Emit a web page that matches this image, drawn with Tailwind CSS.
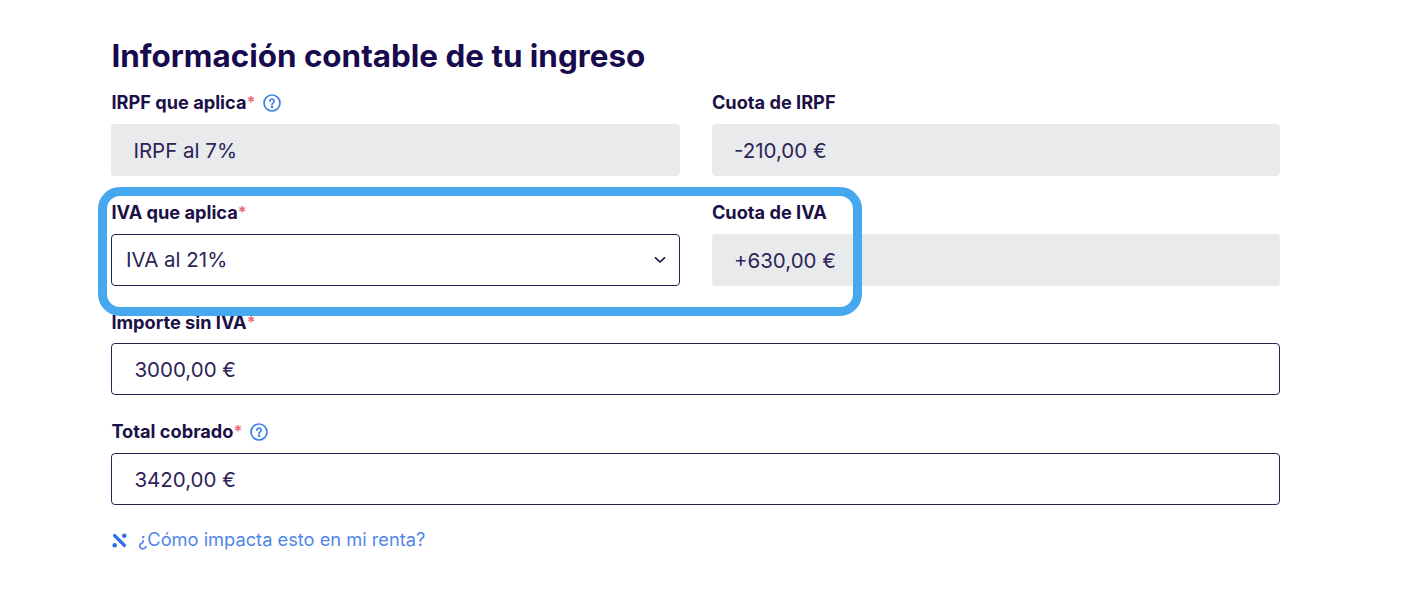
<!DOCTYPE html>
<html lang="es">
<head>
<meta charset="utf-8">
<script src="https://cdn.jsdelivr.net/npm/@tailwindcss/browser@4"></script>
</head>
<body class="bg-white">
<main class="relative w-[1426px] h-[594px] overflow-hidden pl-[111.4px] pt-[36px] font-['Inter',sans-serif] text-[#1b0f4b]">
  <h1 class="h-[40px] text-[31.4px] leading-[40px] font-[650] text-[#170a4d]">Información contable de tu ingreso</h1>
  <form class="mt-[16px] w-[1169px] grid grid-cols-2 gap-x-[32px] gap-y-[26px]">
    <div>
      <div class="h-[22px] mb-[10px] flex items-center text-[18.2px] font-[650] text-[#1c1147]">IRPF que aplica<span class="-mt-[3px] text-[16px] text-[#e9697a]">*</span>
        <svg class="ml-[8px] -mt-[1px]" width="18" height="18" viewBox="0 0 18 18" fill="none" stroke="#3f7fe8" stroke-width="1.7"><circle cx="9" cy="9" r="8"/><path d="M6.9 7.2a2.1 2.1 0 1 1 3.3 1.7c-.7.5-1.2.9-1.2 1.6" stroke-linecap="round"/><circle cx="9" cy="12.8" r=".5" fill="#3f7fe8"/></svg>
      </div>
      <div class="h-[52px] rounded-[4px] bg-[#e9eaec] pl-[22px] pt-[2px] flex items-center text-[20.5px] text-[#2c2358]">IRPF al 7%</div>
    </div>
    <div>
      <div class="h-[22px] mb-[10px] flex items-center text-[18.2px] font-[650] text-[#1c1147]">Cuota de IRPF</div>
      <div class="h-[52px] rounded-[4px] bg-[#e9eaec] pl-[22px] pt-[2px] flex items-center text-[20.5px] text-[#2c2358]">-210,00 €</div>
    </div>
    <div>
      <div class="h-[22px] mb-[10px] flex items-center text-[18.2px] font-[650] text-[#1c1147]">IVA que aplica<span class="-mt-[3px] text-[16px] text-[#e9697a]">*</span></div>
      <div class="h-[52px] rounded-[4px] border border-[#2a2350] pl-[13.5px] pr-[13px] flex items-center justify-between text-[20.5px] text-[#2c2358]">IVA al 21%
        <svg width="12" height="8" viewBox="0 0 12 8" fill="none" stroke="#1c1147" stroke-width="1.7" stroke-linecap="round" stroke-linejoin="round"><path d="M1.5 1.8 6 6l4.5-4.2"/></svg>
      </div>
    </div>
    <div>
      <div class="h-[22px] mb-[10px] flex items-center text-[18.2px] font-[650] text-[#1c1147]">Cuota de IVA</div>
      <div class="h-[52px] rounded-[4px] bg-[#e9eaec] pl-[22px] pt-[2px] flex items-center text-[20.5px] text-[#2c2358]">+630,00 €</div>
    </div>
    <div class="col-span-2">
      <div class="h-[22px] mb-[9px] flex items-center text-[18.2px] font-[650] text-[#1c1147]">Importe sin IVA<span class="-mt-[3px] text-[16px] text-[#e9697a]">*</span></div>
      <div class="h-[52px] rounded-[4px] border border-[#2a2350] pl-[22px] pt-[2px] flex items-center text-[20.5px] text-[#2c2358]">3000,00 €</div>
    </div>
    <div class="col-span-2">
      <div class="h-[22px] mb-[10px] flex items-center text-[18.2px] font-[650] text-[#1c1147]">Total cobrado<span class="-mt-[3px] text-[16px] text-[#e9697a]">*</span>
        <svg class="ml-[8px] -mt-[1px]" width="18" height="18" viewBox="0 0 18 18" fill="none" stroke="#3f7fe8" stroke-width="1.7"><circle cx="9" cy="9" r="8"/><path d="M6.9 7.2a2.1 2.1 0 1 1 3.3 1.7c-.7.5-1.2.9-1.2 1.6" stroke-linecap="round"/><circle cx="9" cy="12.8" r=".5" fill="#3f7fe8"/></svg>
      </div>
      <div class="h-[52px] rounded-[4px] border border-[#2a2350] pl-[22px] pt-[2px] flex items-center text-[20.5px] text-[#2c2358]">3420,00 €</div>
    </div>
  </form>
  <a class="mt-[23px] h-[24px] flex items-center gap-[11px] text-[18.25px] text-[#4f86ea]">
    <svg class="ml-[0.6px]" width="15" height="15" viewBox="0 0 15 15" fill="#2f6fe4"><path d="M2.6 2.6 12.4 12.4" stroke="#2f6fe4" stroke-width="3.4" stroke-linecap="round" fill="none"/><circle cx="12.3" cy="2.8" r="2.3"/><circle cx="2.7" cy="12.3" r="2.3"/></svg>
    ¿Cómo impacta esto en mi renta?
  </a>
  <div class="absolute left-[98px] top-[187px] w-[764px] h-[129px] rounded-[22px] border-[9px] border-[#46a8ef]"></div>
</main>
</body>
</html>
